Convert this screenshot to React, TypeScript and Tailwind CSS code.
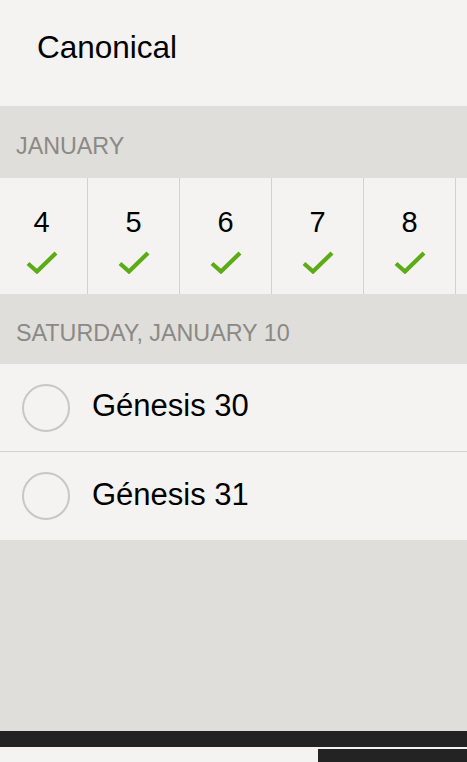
import React from "react";

const Check = () => (
  <svg width="32" height="23" viewBox="0 0 32 23" className="block">
    <path d="M2 12.5 L11 20.5 L30 2" fill="none" stroke="#5cac16" strokeWidth="4.2" strokeLinecap="butt" strokeLinejoin="miter" />
  </svg>
);

export default function App() {
  const days = ["4", "5", "6", "7", "8"];
  const readings = ["Génesis 30", "Génesis 31"];
  const font = { fontFamily: '"Liberation Sans", Arial, sans-serif' };
  return (
    <div className="w-[467px] h-[762px] flex flex-col bg-[#dfdeda] overflow-hidden" style={font}>
      <div className="h-[106px] shrink-0 bg-[#f4f3f1] flex items-center pl-[37px] pb-[11px] text-[31.5px] text-black leading-none">
        Canonical
      </div>
      <div className="h-[72px] shrink-0 flex items-center pl-4 pt-[10px] text-[23.3px] text-[#8b8985] leading-none">
        JANUARY
      </div>
      <div className="h-[116px] shrink-0 flex bg-[#f4f3f1] ml-[-4px]">
        {days.map((d) => (
          <div key={d} className="w-[92px] shrink-0 border-r border-[#d3d1ce] flex flex-col items-center pt-[30px]">
            <div className="text-[29px] leading-none text-black">{d}</div>
            <div className="mt-[14px]">
              <Check />
            </div>
          </div>
        ))}
        <div className="w-[92px] shrink-0" />
      </div>
      <div className="h-[70px] shrink-0 flex items-center pl-4 pt-[9px] text-[23.3px] text-[#8b8985] leading-none">
        SATURDAY, JANUARY 10
      </div>
      {readings.map((r, i) => (
        <div
          key={r}
          className={`h-[88px] shrink-0 bg-[#f4f3f1] flex items-center ${i === 0 ? "border-b border-[#d3d1ce]" : ""}`}
        >
          <div className="ml-[22px] w-[48px] h-[48px] rounded-full border-2 border-[#c9c7c3]" />
          <div className="ml-[22px] mb-[4px] text-[31px] leading-none text-black">{r}</div>
        </div>
      ))}
      <div className="flex-1" />
      <div className="h-[16px] shrink-0 bg-[#232323]" />
      <div className="h-[15px] shrink-0 flex bg-[#f4f3f1]">
        <div className="flex-1" />
        <div className="w-[149px] mt-[2px] bg-[#232323]" />
      </div>
    </div>
  );
}
